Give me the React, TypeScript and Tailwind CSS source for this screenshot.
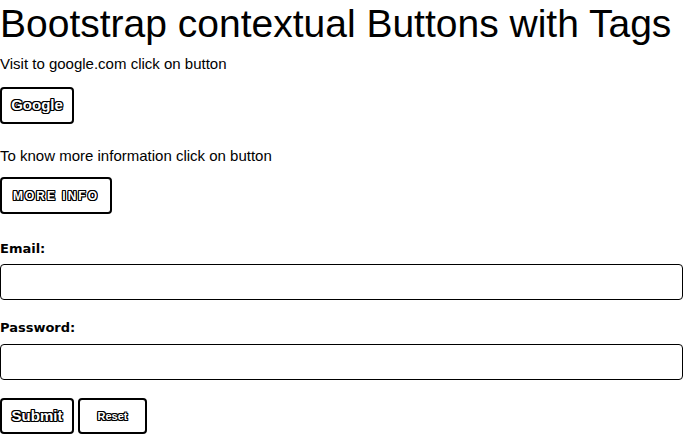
import React from "react";

const outline =
  "text-white [text-shadow:1px_0_0_#000,-1px_0_0_#000,0_1px_0_#000,0_-1px_0_#000,1px_1px_0_#000,-1px_-1px_0_#000,1px_-1px_0_#000,-1px_1px_0_#000]";

export default function App() {
  return (
    <div className="w-[687px] h-[440px] bg-white text-black overflow-hidden [font-family:'Liberation_Sans',Arial,sans-serif]">
      <h1 className="text-[39px] leading-[48px] font-normal m-0 whitespace-nowrap">
        Bootstrap contextual Buttons with Tags
      </h1>
      <p className="mt-[6px] text-[15px] leading-[20px]">Visit to google.com click on button</p>
      <div className="mt-[13px] flex">
        <a
          href="#"
          className={`w-[74px] h-[37px] border-2 border-black rounded-[4px] flex items-center justify-center text-[15px] font-bold ${outline}`}
        >
          Google
        </a>
      </div>
      <p className="mt-[22px] text-[15px] leading-[20px]">To know more information click on button</p>
      <div className="mt-[11px] flex">
        <button
          className={`w-[112px] h-[37px] border-2 border-black rounded-[4px] flex items-center justify-center text-[12px] font-bold tracking-[2px] ${outline}`}
        >
          MORE INFO
        </button>
      </div>
      <form className="flex flex-col">
        <label className="mt-[25px] text-[13px] leading-[20px] font-bold [font-family:'DejaVu_Sans',sans-serif]">
          Email:
        </label>
        <input
          type="email"
          className="mt-[5px] w-[683px] h-[36px] border border-black rounded-[4px] outline-none"
        />
        <label className="mt-[18px] text-[13px] leading-[20px] font-bold [font-family:'DejaVu_Sans',sans-serif]">
          Password:
        </label>
        <input
          type="password"
          className="mt-[6px] w-[683px] h-[36px] border border-black rounded-[4px] outline-none"
        />
        <div className="mt-[18px] flex gap-[4px]">
          <button
            type="button"
            className={`w-[74px] h-[36px] border-2 border-black rounded-[4px] flex items-center justify-center text-[15px] font-bold ${outline}`}
          >
            Submit
          </button>
          <button
            type="button"
            className={`w-[69px] h-[36px] border-2 border-black rounded-[4px] flex items-center justify-center text-[11px] font-bold ${outline}`}
          >
            Reset
          </button>
        </div>
      </form>
    </div>
  );
}
